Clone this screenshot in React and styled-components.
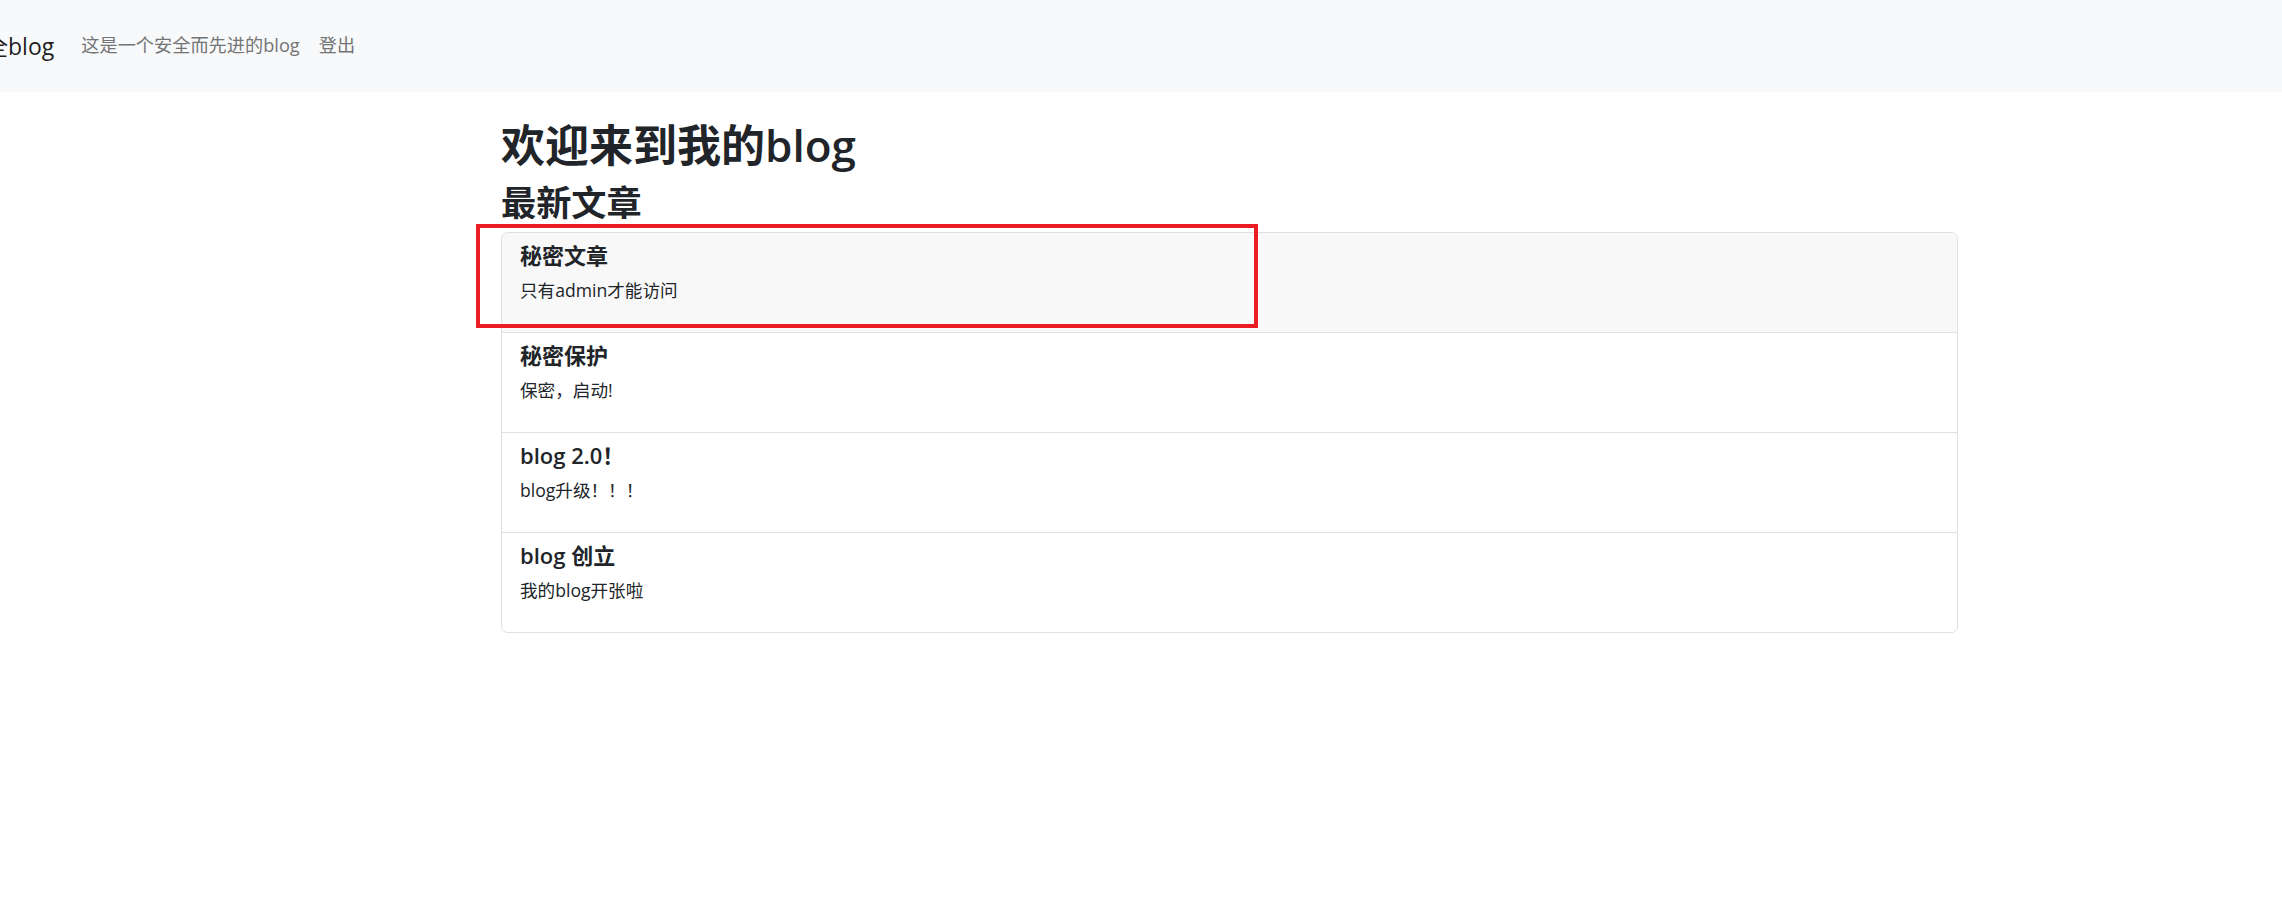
import React from 'react';
import styled, { createGlobalStyle } from 'styled-components';

/* palette */
const ink = '#212529';
const navBg = '#f8f9fa';
const linkGrey = '#737475';
const line = '#dfdfdf';
const hoverBg = '#f8f8f8';
const markRed = '#ec1c24';
const fontStack = '"Open Sans", "Noto Sans CJK SC", sans-serif';

const GlobalStyle = createGlobalStyle`
  html, body {
    margin: 0;
    padding: 0;
    background: #fff;
  }
  body {
    font-family: ${fontStack};
    color: ${ink};
    font-size: 17.6px;
  }
  * {
    box-sizing: border-box;
  }
`;

const NavBar = styled.nav`
  display: flex;
  align-items: center;
  height: 92px;
  background: ${navBg};
  overflow: hidden;
`;

const Brand = styled.a`
  margin-left: -38px;
  margin-right: 17.6px;
  font-size: 23px;
  line-height: 1.5;
  color: rgba(0, 0, 0, 0.9);
  white-space: nowrap;
  text-decoration: none;
`;

const NavLinks = styled.ul`
  display: flex;
  margin: 0;
  padding: 0;
  list-style: none;
`;

const NavLink = styled.li`
  padding: 8.8px 9.5px;
  font-size: 18.2px;
  line-height: 1.5;
  color: ${linkGrey};
  white-space: nowrap;
  cursor: pointer;
`;

const Main = styled.main`
  width: 1457px;
  margin-left: 501px;
  padding-top: 27px;
`;

const PageTitle = styled.h1`
  margin: 0 0 8.8px;
  font-size: 44px;
  font-weight: 600;
  line-height: 1.2;
`;

const SectionTitle = styled.h2`
  margin: 0 0 8.8px;
  font-size: 35.2px;
  font-weight: 600;
  line-height: 1.2;
`;

const PostList = styled.div`
  position: relative;
  display: flex;
  flex-direction: column;
  border: 1px solid ${line};
  border-radius: 6.6px;
`;

const PostItem = styled.div`
  height: ${(props) => (props.$last ? '99px' : '100px')};
  padding: 9px 18px 0;
  background: ${(props) => (props.$hover ? hoverBg : '#fff')};
  border-bottom: ${(props) => (props.$last ? 'none' : `1px solid ${line}`)};
  border-radius: ${(props) => (props.$first ? '6px 6px 0 0' : props.$last ? '0 0 6px 6px' : '0')};
`;

const PostTitle = styled.h5`
  margin: 0 0 9px;
  font-size: 22px;
  font-weight: 600;
  line-height: 1.2;
`;

const PostSummary = styled.p`
  margin: 0;
  font-size: 17.6px;
  line-height: 1.5;
`;

/* annotation drawn over the first entry */
const Highlight = styled.div`
  position: absolute;
  left: -26px;
  top: -9px;
  width: 782px;
  height: 104px;
  border: 4.5px solid ${markRed};
  pointer-events: none;
`;

const posts = [
  { title: '秘密文章', summary: '只有admin才能访问' },
  { title: '秘密保护', summary: '保密，启动!' },
  { title: 'blog 2.0！', summary: 'blog升级！！！' },
  { title: 'blog 创立', summary: '我的blog开张啦' },
];

function App() {
  return (
    <>
      <GlobalStyle />
      <NavBar>
        <Brand href="#">安全blog</Brand>
        <NavLinks>
          <NavLink>这是一个安全而先进的blog</NavLink>
          <NavLink>登出</NavLink>
        </NavLinks>
      </NavBar>
      <Main>
        <PageTitle>欢迎来到我的blog</PageTitle>
        <SectionTitle>最新文章</SectionTitle>
        <PostList>
          {posts.map((p, i) => (
            <PostItem
              key={p.title}
              $hover={i === 0}
              $first={i === 0}
              $last={i === posts.length - 1}
            >
              <PostTitle>{p.title}</PostTitle>
              <PostSummary>{p.summary}</PostSummary>
            </PostItem>
          ))}
          <Highlight />
        </PostList>
      </Main>
    </>
  );
}

export default App;
